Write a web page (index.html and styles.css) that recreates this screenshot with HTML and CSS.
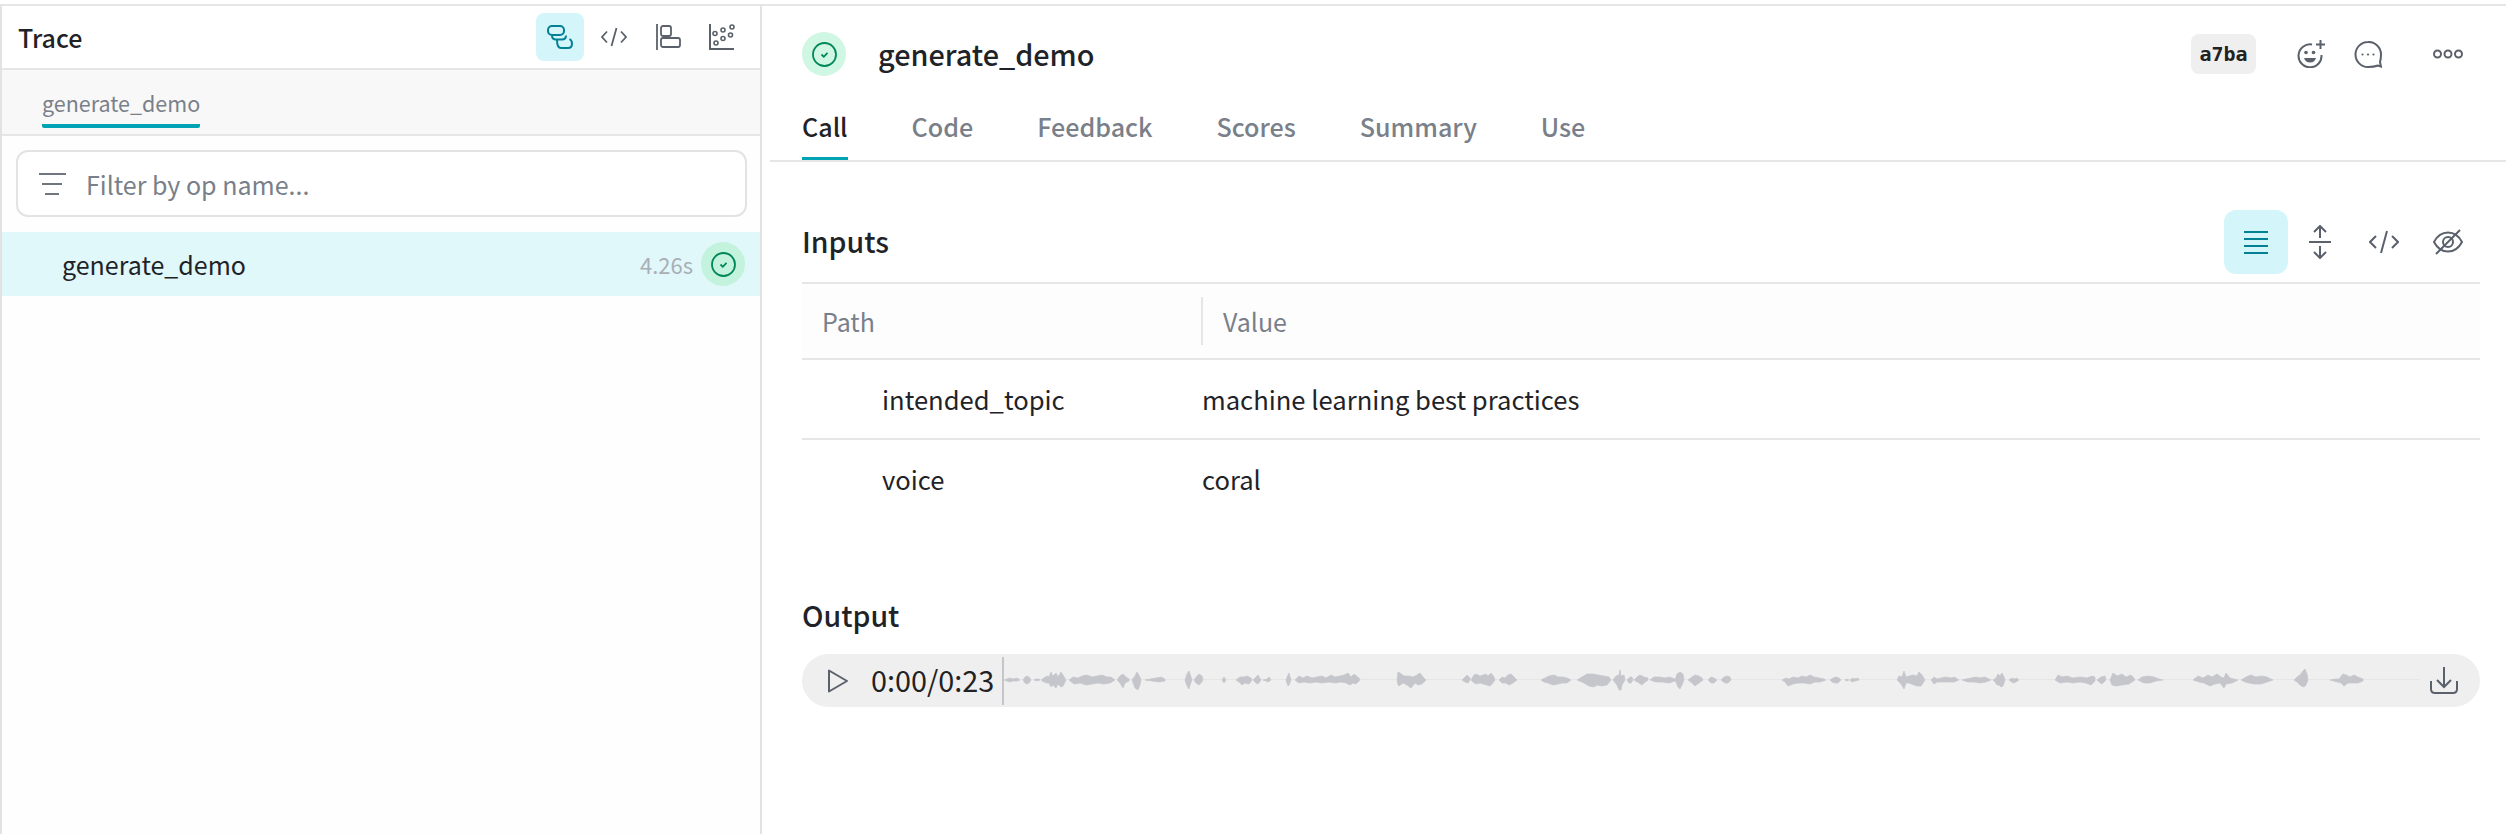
FILE: index.html
```html
<!DOCTYPE html>
<html lang="en">
<head>
<meta charset="utf-8">
<title>generate_demo</title>
<link rel="stylesheet" href="styles.css">
</head>
<body>
<div class="app">
  <aside class="sidebar">
    <header class="side-head">
      <span class="side-title">Trace</span>
      <div class="side-tools">
        <button class="tool active">
          <svg width="26" height="24" viewBox="0 0 26 24" fill="none" stroke="#038194" stroke-width="2"><rect x="1" y="1" width="16" height="9" rx="4"/><path d="M5 10.5Q5 14.5 9 14.500H15Q19 14.500 19 10.500"/><path d="M10 15Q10 23 14 23H21Q25 23 25 18.500Q25 15.500 22.500 14"/></svg>
        </button>
        <button class="tool">
          <svg width="26" height="20" viewBox="0 0 26 20" fill="none" stroke="#5a616b" stroke-width="1.800"><path d="M6 4.500L1 10L6 15.500M20 4.500L25 10L20 15.500M15.500 1L10.500 19"/></svg>
        </button>
        <button class="tool">
          <svg width="25" height="26" viewBox="0 0 25 26" fill="none" stroke="#5a616b" stroke-width="1.800"><path d="M1 0V26"/><rect x="5" y="2" width="10" height="10" rx="2"/><rect x="5" y="14" width="19" height="9" rx="2"/></svg>
        </button>
        <button class="tool">
          <svg width="26" height="26" viewBox="0 0 26 26" fill="none" stroke="#5a616b" stroke-width="1.600"><path d="M1 0V25H25" stroke-width="2"/><circle cx="23" cy="3" r="2"/><circle cx="14" cy="6" r="2"/><circle cx="6" cy="9.500" r="2"/><circle cx="21.500" cy="11" r="2"/><circle cx="14" cy="14.500" r="2"/><circle cx="7" cy="19" r="2"/></svg>
        </button>
      </div>
    </header>
    <nav class="side-tabs"><span class="side-tab">generate_demo</span></nav>
    <label class="filter">
      <svg class="filter-icon" width="27" height="22" viewBox="0 0 27 22" fill="none" stroke="#6f7680" stroke-width="2"><path d="M0 1H27M3 11H23M6 21H20"/></svg>
      <span class="filter-text">Filter by op name...</span>
    </label>
    <div class="tree-row">
      <span class="tree-name">generate_demo</span>
      <span class="tree-time">4.26s</span>
      <span class="ok-badge ok-side">
        <svg width="25" height="25" viewBox="0 0 25 25" fill="none" stroke="#00875a" stroke-width="1.800"><circle cx="12.500" cy="12.500" r="11.500"/><path d="M9.500 12.500L11.800 14.800L15.500 10.800"/></svg>
      </span>
    </div>
  </aside>

  <main class="main">
    <header class="main-head">
      <div class="title-row">
        <span class="ok-badge">
          <svg width="25" height="25" viewBox="0 0 25 25" fill="none" stroke="#00875a" stroke-width="1.800"><circle cx="12.500" cy="12.500" r="11.500"/><path d="M9.500 12.500L11.800 14.800L15.500 10.800"/></svg>
        </span>
        <h1 class="title">generate_demo</h1>
        <span class="id-pill">a7ba</span>
        <button class="head-btn">
          <svg width="30" height="28" viewBox="0 0 30 28" fill="none" stroke="#5a616b" stroke-width="2"><path d="M15 4.500A11.500 11.500 0 1 0 24.500 15"/><path d="M23.500 0V9M19 4.500H28"/><circle cx="9" cy="12.500" r="1.800" fill="#5a616b" stroke="none"/><circle cx="16.500" cy="12.500" r="1.800" fill="#5a616b" stroke="none"/><path d="M7 18H19Q17.500 22.500 13 22.500Q8.500 22.500 7 18Z" fill="#5a616b" stroke="none"/></svg>
        </button>
        <button class="head-btn">
          <svg width="28" height="27" viewBox="0 0 28 27" fill="none" stroke="#5a616b" stroke-width="2"><path d="M14 1A12.500 12.500 0 1 0 14 26Q20 26 24 24.500L27 25.500L26 21Q27 18 27 13.500A12.500 12.500 0 0 0 14 1Z"/><circle cx="8.500" cy="13.500" r="1.100" fill="#5a616b" stroke="none"/><circle cx="14" cy="13.500" r="1.100" fill="#5a616b" stroke="none"/><circle cx="19.500" cy="13.500" r="1.100" fill="#5a616b" stroke="none"/></svg>
        </button>
        <button class="head-btn more">
          <svg width="30" height="10" viewBox="0 0 30 10" fill="none" stroke="#5a616b" stroke-width="2"><circle cx="4.500" cy="5" r="3.500"/><circle cx="15" cy="5" r="3.500"/><circle cx="25.500" cy="5" r="3.500"/></svg>
        </button>
      </div>
      <nav class="tabs">
        <span class="tab active">Call</span>
        <span class="tab">Code</span>
        <span class="tab">Feedback</span>
        <span class="tab">Scores</span>
        <span class="tab">Summary</span>
        <span class="tab">Use</span>
      </nav>
    </header>

    <section class="content">
      <div class="section-head">
        <h2 class="section-title">Inputs</h2>
        <div class="view-tools">
          <button class="view-btn active">
            <svg width="24" height="23" viewBox="0 0 24 23" fill="none" stroke="#038194" stroke-width="2"><path d="M0 1H24M0 8H24M0 15H24M0 22H24"/></svg>
          </button>
          <button class="view-btn">
            <svg width="22" height="34" viewBox="0 0 22 34" fill="none" stroke="#5a616b" stroke-width="2"><path d="M0 17H22M11 1V13M5 7L11 1L17 7M11 21V33M5 27L11 33L17 27"/></svg>
          </button>
          <button class="view-btn">
            <svg width="30" height="24" viewBox="0 0 30 24" fill="none" stroke="#5a616b" stroke-width="2"><path d="M7 6L1 12L7 18M23 6L29 12L23 18M18 1L12 23"/></svg>
          </button>
          <button class="view-btn">
            <svg width="30" height="26" viewBox="0 0 30 26" fill="none" stroke="#5a616b" stroke-width="2"><path d="M1 13Q6 3.500 15 3.500Q24 3.500 29 13Q24 22.500 15 22.500Q6 22.500 1 13Z"/><circle cx="15" cy="13" r="5"/><path d="M27 1L3 25"/></svg>
          </button>
        </div>
      </div>

      <div class="table">
        <div class="t-head">
          <span class="th th-path">Path</span>
          <span class="th th-value">Value</span>
        </div>
        <div class="t-row">
          <span class="td-key">intended_topic</span>
          <span class="td-val">machine learning best practices</span>
        </div>
        <div class="t-row last">
          <span class="td-key">voice</span>
          <span class="td-val">coral</span>
        </div>
      </div>

      <h2 class="section-title output-title">Output</h2>
      <div class="player">
        <svg class="play" width="20" height="24" viewBox="0 0 20 24" fill="none" stroke="#5a616b" stroke-width="2" stroke-linejoin="round"><path d="M1 1.500V22.500L19 12Z"/></svg>
        <span class="time">0:00/0:23</span>
        <span class="cursor"></span>
        <svg class="wave" width="1416" height="53" viewBox="0 -26 1416 53" fill="#c5c6cb" stroke="#c5c6cb" stroke-width="0.700">
          <rect x="0" y="-1" width="1416" height="1" fill="#e6e6e6" stroke="none"/>
          <path d="M0 0L3-1 6-2 9-1 13-2 16 0 13 1 9 1 6 2 3 1Z"/>
          <path d="M19 0L21-3 23-4 25-3 27 0 25 3 23 4 21 3Z"/>
          <path d="M30 0L32-1 35-1 36 0 33 1Z"/>
          <path d="M37 0L40-2 43-4 45-3 47-8 49-4 52-7 54-3 57-8 59-5 62 0 59 6 57 7 54 4 52 8 49 5 47 7 45 3 43 3 40 2Z"/>
          <path d="M65 0L69-3 74-2 78-4 83-5 88-3 93-4 98-5 103-3 107-3 111 0 106 3 100 4 94 3 88 4 82 5 76 3 70 4Z"/>
          <path d="M113 0L116-4 119-6 122-3 125-1 125 1 121 3 119 8 116 3Z"/>
          <path d="M128 0L131-4 133-8 136-3 137 0 136 5 134 10 131 8Z"/>
          <path d="M141 0L146-1 152-2 157-3 161-1 161 1 155 2 148 1Z"/>
          <path d="M181 0L183-6 185-9 187-3 188 0 186 5 185 9 183 6Z"/>
          <path d="M190 0L193-4 195-6 198-4 199 0 197 3 195 5 192 3Z"/>
          <path d="M218 0L220-3 222 0 220 3Z"/>
          <path d="M232 0L236-3 240-3 243-4 247-2 248 0 245 4 241 3 238 5 235 2Z"/>
          <path d="M249 0L252-3 254-5 257 0 254 4 252 3Z"/>
          <path d="M259 0L263-1 265-3 267 0 264 2 262 1Z"/>
          <path d="M282 0L284-5 285-7 287 0 285 5 284 6Z"/>
          <path d="M291 0L295-4 299-2 303-4 308-2 313-3 318-4 322-2 327-5 331-3 336-4 340-5 344-7 347-3 350-6 355-2 356 0 352 4 349 3 346 5 342 3 337 2 331 3 325 2 318 3 312 2 306 3 300 2 295 3Z"/>
          <path d="M393 0L394-8 396-7 400-4 405-4 409-3 413-5 416-7 419-3 422 0 418 4 414 5 411 3 407 8 403 5 399 3 395 6 394 5Z"/>
          <path d="M458 0L461-3 463-5 466-2 466 0 464 3 461 2Z"/>
          <path d="M467 0L470-5 472-6 476-4 479-5 482-6 484-4 487-7 490-3 491 0 488 4 486 6 483 5 479 4 476 3 472 4 469 2Z"/>
          <path d="M495 0L498-3 501-2 504-5 507-6 510-3 513 0 509 3 505 5 502 3 498 3Z"/>
          <path d="M537 0L541-2 545-4 550-5 554-3 559-3 563-2 567 0 563 3 558 3 554 4 549 5 544 3 540 2Z"/>
          <path d="M573 0L578-3 583-6 589-6 594-5 600-4 605-3 607 0 603 5 598 6 593 5 590 7 585 6 580 3Z"/>
          <path d="M609 0L612-4 615-5 616-10 617-4 620-5 621 0 618 5 617 10 615 10 613 5Z"/>
          <path d="M623 0L626-3 628-3 629 0 627 3 625 3Z"/>
          <path d="M630 0L633-3 636-5 640-3 644-2 644 0 640 3 638 5 635 3Z"/>
          <path d="M646 0L650-3 656-3 661-2 665-3 671-1 671 1 665 3 658 2 652 2Z"/>
          <path d="M671 0L673-6 676-8 679-6 680 0 678 5 676 9 674 7Z"/>
          <path d="M684 0L688-3 691-5 695-4 698-2 699 0 695 3 691 6 688 3Z"/>
          <path d="M704 0L707-3 710-2 713 0 710 3 707 3Z"/>
          <path d="M717 0L720-3 723-4 726-3 727 0 724 3 721 3Z"/>
          <path d="M778 0L782-2 785-1 789-3 794-2 798-4 802-3 806-5 810-3 815-2 820-1 822 0 816 2 811 2 806 4 800 3 794 3 789 4 784 6 781 2Z"/>
          <path d="M826 0L829-2 832-3 835-2 837 0 834 3 831 3 828 2Z"/>
          <path d="M841 0L843-1 845 0 843 1Z"/>
          <path d="M846 0L849-2 851-1 854-2 855 0 851 1 848 2Z"/>
          <path d="M893 0L895-4 898-3 900-9 902-3 905-4 909-5 913-4 915-8 918-5 921 0 917 6 913 6 910 5 905 3 902 3 900 9 897 4Z"/>
          <path d="M927 0L930-3 933-1 937-2 942-3 947-2 951-3 953-1 955 0 950 2 945 2 939 2 933 2 930 4Z"/>
          <path d="M958 0L962-1 967-2 972-3 976-2 981-3 985-1 987 0 982 2 976 3 970 2 964 2Z"/>
          <path d="M989 0L992-2 994-6 996-4 998-7 1000-3 1001 0 999 6 997 7 995 5 993 5 991 2Z"/>
          <path d="M1005 0L1008-2 1011-1 1013-2 1015 0 1012 2 1009 3Z"/>
          <path d="M1051 0L1054-5 1058-3 1063-4 1069-2 1076-3 1083-2 1088-4 1091-3 1091 1 1087 5 1082 3 1076 2 1069 3 1063 2 1056 3Z"/>
          <path d="M1093 0L1097-3 1101-4 1102 0 1098 4 1095 2Z"/>
          <path d="M1106 0L1109-7 1113-4 1118-6 1122-3 1127-5 1130-2 1131 0 1125 4 1118 5 1112 6 1108 5Z"/>
          <path d="M1134 0L1138-3 1144-4 1150-3 1155-1 1159 0 1152 1 1146 3 1140 3Z"/>
          <path d="M1189 0L1194-4 1199-2 1204-5 1208-3 1213-6 1217-3 1220-2 1222-7 1226-2 1234 0 1228 3 1222 4 1220 8 1216 3 1211 4 1206 6 1200 3 1195 2Z"/>
          <path d="M1237 0L1242-3 1247-5 1252-3 1258-4 1263-3 1269 0 1263 2 1257 4 1250 4 1245 3 1241 2Z"/>
          <path d="M1290 0L1293-3 1296-5 1299-9 1301-11 1303-6 1304 0 1302 5 1300 7 1297 6 1293 2Z"/>
          <path d="M1326 0L1331-1 1335-1 1339-6 1342-5 1346-3 1350-5 1354-3 1359-1 1359 1 1354 3 1349 3 1344 3 1340 6 1337 3Z"/>
        </svg>
        <svg class="download" width="28" height="27" viewBox="0 0 28 27" fill="none" stroke="#5a616b" stroke-width="2"><path d="M14 0V19M7 13L14 20L21 13"/><path d="M1 14V22Q1 26 5 26H23Q27 26 27 22V14"/></svg>
      </div>
    </section>
  </main>
</div>
</body>
</html>
```
FILE: styles.css
```css
* { box-sizing: border-box; }
html, body { margin: 0; height: 100%; }
body {
  padding-top: 4px;
  background: #fff;
  color: #1f2328;
  font-family: "Noto Sans CJK SC", "Noto Sans", sans-serif;
  font-size: 25.600px;
  overflow: hidden;
}
h1, h2 { margin: 0; }
button { border: 0; padding: 0; background: none; display: flex; align-items: center; justify-content: center; }

.app { display: flex; height: 830px; border-top: 2px solid #e6e6e6; }

/* Sidebar */
.sidebar {
  width: 762px;
  flex: none;
  border-left: 2px solid #e2e2e2;
  border-right: 2px solid #e2e2e2;
  background: #fefefe;
}
.side-head {
  height: 64px;
  display: flex;
  align-items: center;
  justify-content: space-between;
  padding: 0 14px 0 16px;
  background: #fff;
  border-bottom: 2px solid #e6e6e6;
}
.side-title { font-size: 25px; font-weight: 500; line-height: 1; }
.side-tools { display: flex; gap: 6px; }
.tool { width: 48px; height: 48px; border-radius: 8px; }
.tool.active { background: #d4f6fa; }
.side-tabs {
  height: 66px;
  padding-left: 40px;
  background: #f8f8f8;
  border-bottom: 2px solid #e6e6e6;
}
.side-tab {
  display: inline-block;
  height: 58px;
  padding-top: 15px;
  line-height: 36px;
  font-size: 21.500px;
  color: #79808a;
  border-bottom: 4px solid #00a3b4;
  border-radius: 0 0 2px 2px;
}
.filter {
  display: flex;
  align-items: center;
  height: 67px;
  margin: 14px 13px 15px 14px;
  padding-left: 21px;
  background: #fff;
  border: 2px solid #e3e3e3;
  border-radius: 12px;
}
.filter-text { margin-left: 20px; color: #79808a; line-height: 1; font-size: 25px; padding-top: 1px; }
.tree-row {
  display: flex;
  align-items: center;
  height: 64px;
  padding: 0 15px 0 60px;
  background: #e0f8fa;
  font-size: 25px;
}
.tree-name { flex: 1; line-height: 1; }
.tree-time { font-size: 22px; color: #a9aeb5; margin-right: 8px; line-height: 1; }
.ok-badge {
  width: 44px;
  height: 44px;
  flex: none;
  display: flex;
  align-items: center;
  justify-content: center;
  border-radius: 50%;
  background: #d0f6e4;
}
.ok-side { background: #c3f2dd; }

/* Main */
.main { flex: 1; min-width: 0; margin-left: 8px; }
.main-head { height: 156px; padding-top: 26px; border-bottom: 2px solid #e6e6e6; }
.title-row { display: flex; align-items: center; height: 44px; padding: 0 34px 0 32px; gap: 8px; }
.title { flex: 1; margin-left: 24px; font-size: 28.800px; font-weight: 500; line-height: 44px; }
.id-pill {
  height: 40px;
  margin-right: 24px;
  padding: 0 8px;
  width: 65px;
  display: flex;
  align-items: center;
  justify-content: center;
  border-radius: 8px;
  background: #efefef;
  color: #222;
  font-family: "DejaVu Sans Mono", monospace;
  font-size: 20px;
  font-weight: 700;
}
.head-btn { width: 48px; height: 44px; }
.head-btn.more { margin-left: 24px; }
.tabs { display: flex; gap: 64px; margin-top: 19px; padding-left: 32px; }
.tab {
  height: 65px;
  display: flex;
  align-items: center;
  padding-top: 1px;
  font-weight: 500;
  font-size: 25.100px;
  color: #79808a;
  border-bottom: 3px solid transparent;
  line-height: 1;
}
.tab.active { color: #1f2328; border-bottom-color: #00a3b4; }

.content { padding: 48px 26px 0 32px; }
.section-head { display: flex; align-items: center; justify-content: space-between; height: 64px; margin-bottom: 8px; }
.section-title { font-size: 28.500px; font-weight: 500; line-height: 44px; margin-top: -2px; }
.view-tools { display: flex; }
.view-btn { width: 64px; height: 64px; border-radius: 12px; }
.view-btn.active { background: #d4f6fa; }

.table { border-top: 2px solid #e6e6e6; }
.t-head {
  display: grid;
  grid-template-columns: 400px 1fr;
  align-items: center;
  height: 76px;
  background: #fdfdfd;
  border-bottom: 2px solid #e6e6e6;
}
.th { color: #79808a; line-height: 48px; font-size: 25px; }
.th-path { padding-left: 20px; }
.th-value { padding-left: 20px; border-left: 2px solid #e6e6e6; margin-left: -1px; }
.t-row {
  display: grid;
  grid-template-columns: 400px 1fr;
  align-items: center;
  height: 80px;
  border-bottom: 2px solid #e6e6e6;
  line-height: 1;
}
.t-row.last { border-bottom: 0; height: 78px; }
.td-key { padding-left: 80px; }

.output-title { margin-top: 75px; margin-bottom: 17px; }
.player {
  display: flex;
  align-items: center;
  height: 53px;
  padding-left: 26px;
  background: #efefef;
  border-radius: 27px;
}
.play { flex: none; }
.time { margin-left: 23px; width: 122px; flex: none; font-size: 28.800px; line-height: 1; white-space: nowrap; color: #222; }
.cursor { width: 2px; height: 48px; margin-left: 9px; flex: none; background: #c5c6cb; }
.wave { flex: none; }
.download { margin-left: 10px; flex: none; }
```
